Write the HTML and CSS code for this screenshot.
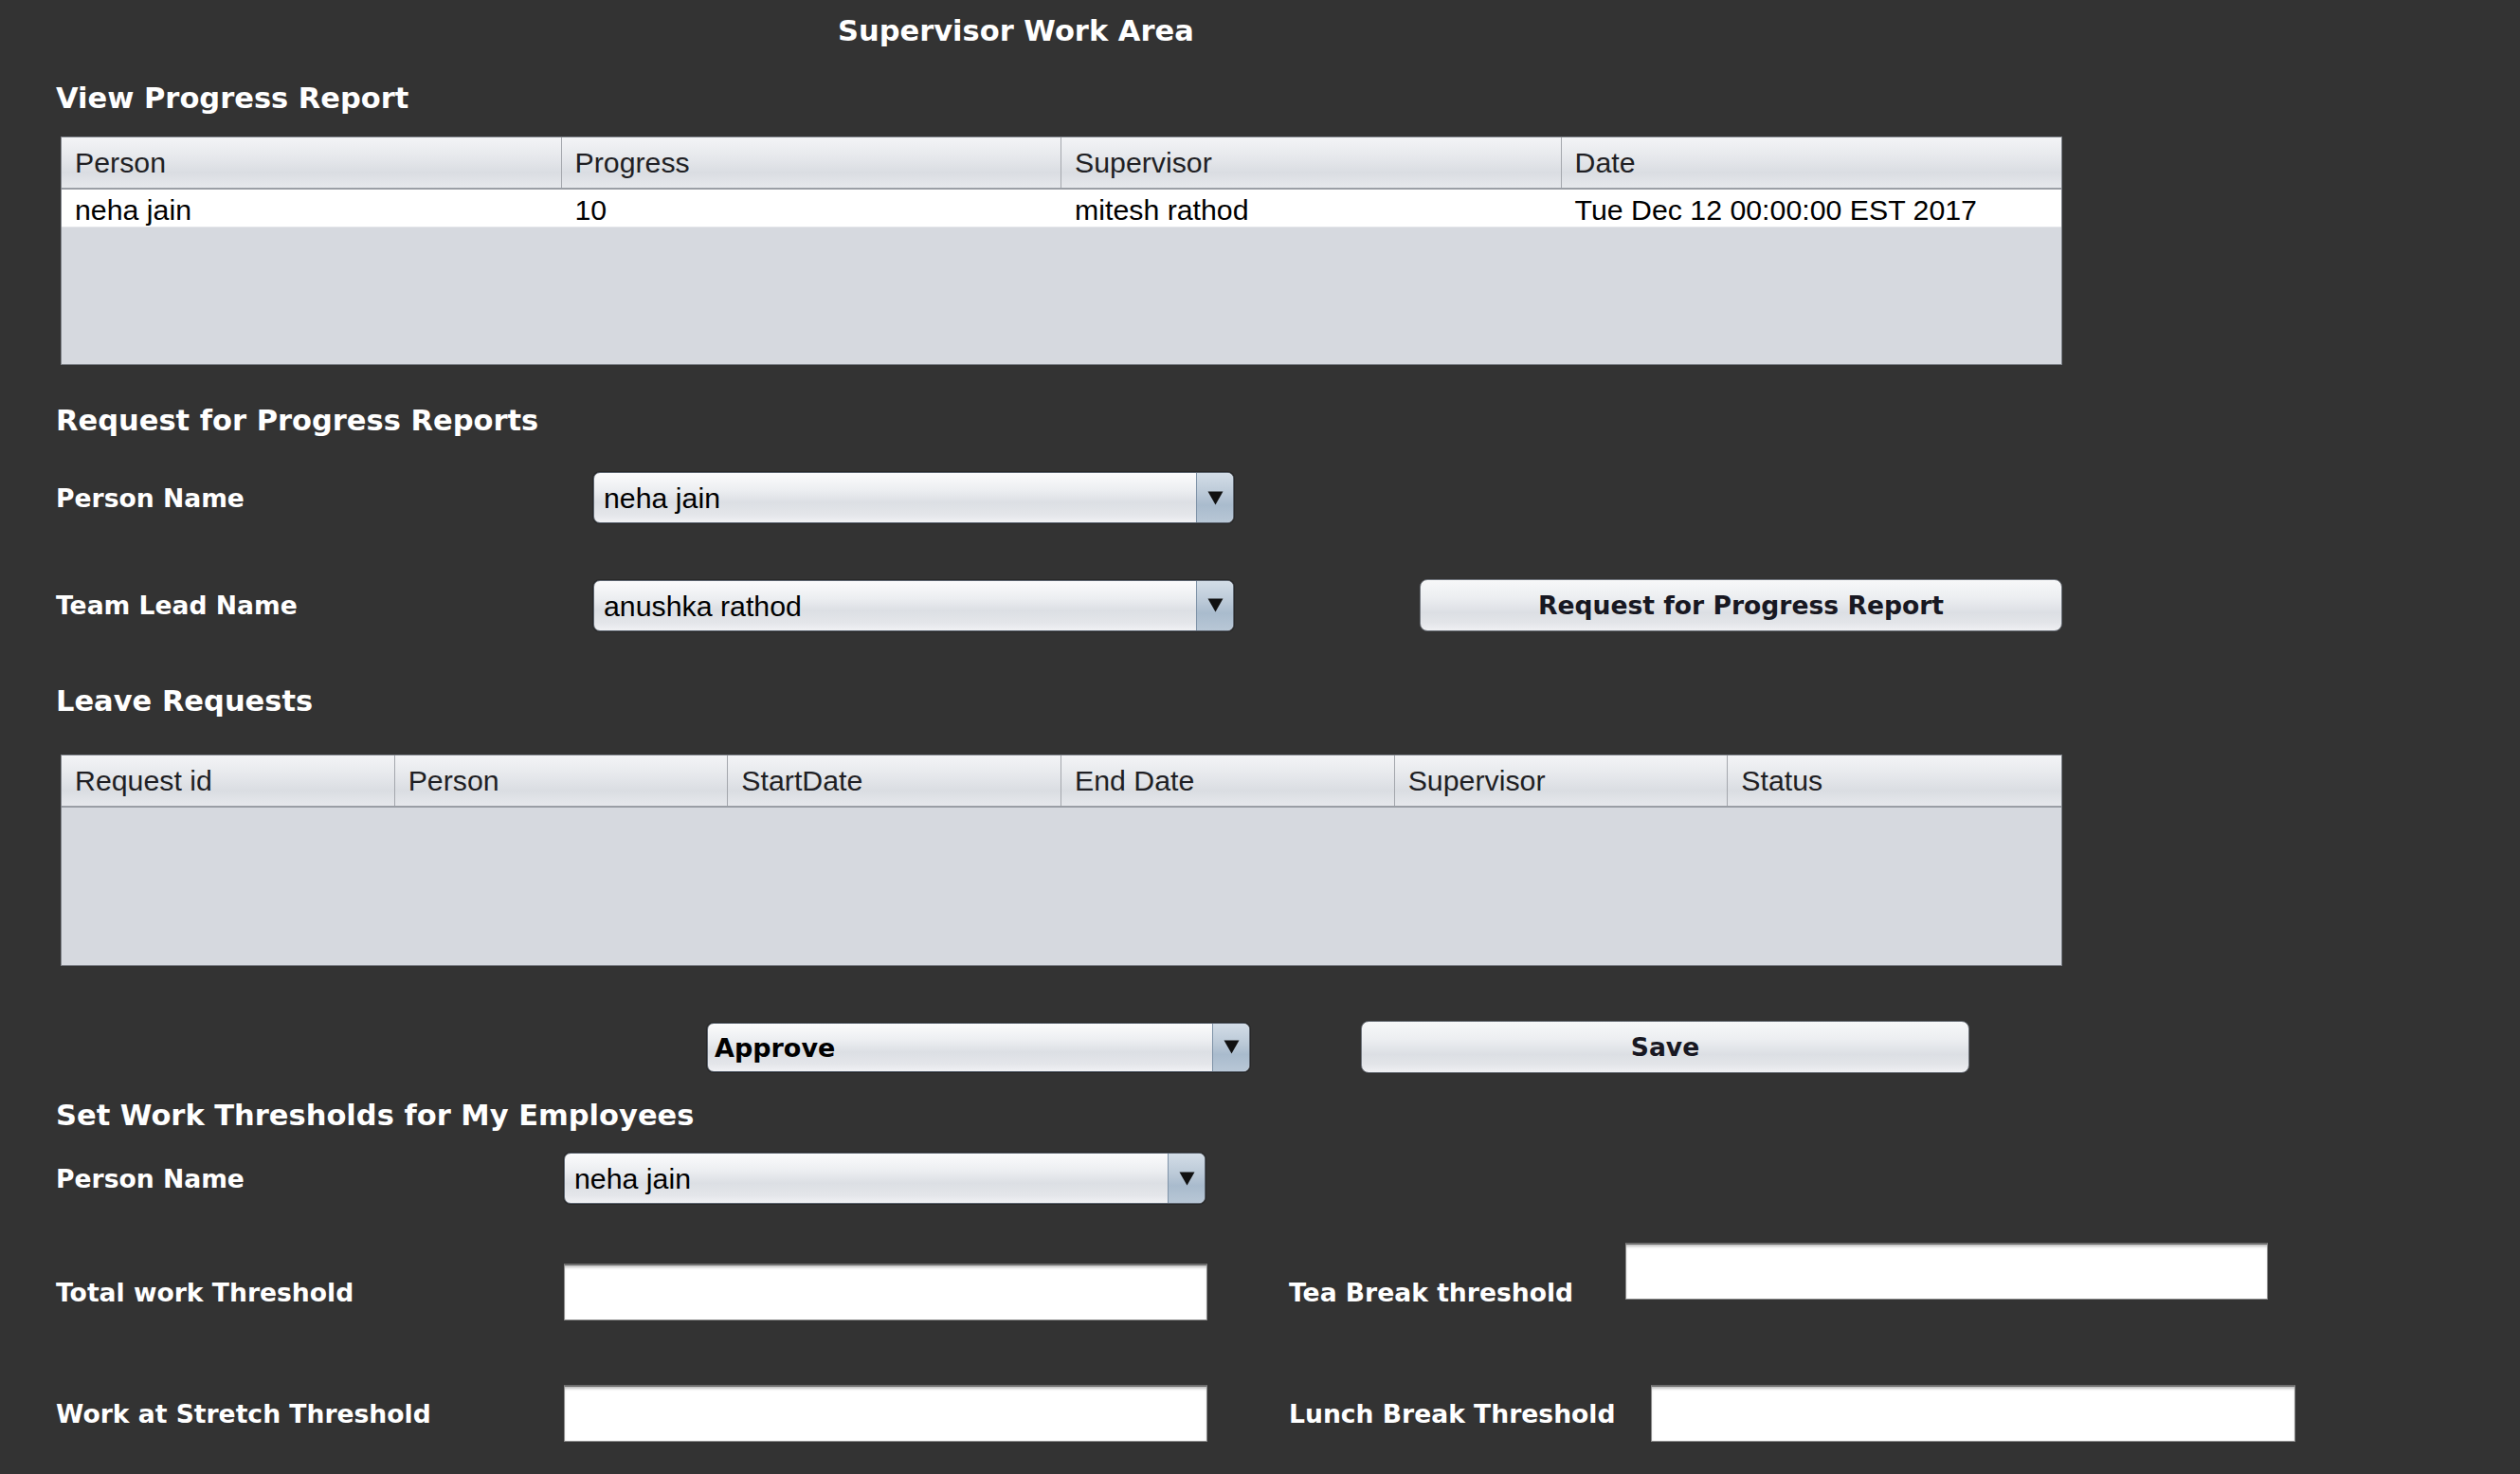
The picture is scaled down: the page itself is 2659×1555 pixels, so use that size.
FILE: index.html
```html
<!DOCTYPE html>
<html>
<head>
<meta charset="utf-8">
<title>Supervisor Work Area</title>
<link rel="stylesheet" href="styles.css">
</head>
<body>
<main class="page">
  <h1 class="title">Supervisor Work Area</h1>

  <h2 class="heading h-view">View Progress Report</h2>
  <div class="tbl tbl-progress">
    <div class="thead cols-4">
      <div class="th">Person</div>
      <div class="th">Progress</div>
      <div class="th">Supervisor</div>
      <div class="th">Date</div>
    </div>
    <div class="trow cols-4">
      <div class="td">neha jain</div>
      <div class="td">10</div>
      <div class="td">mitesh rathod</div>
      <div class="td">Tue Dec 12 00:00:00 EST 2017</div>
    </div>
  </div>

  <h2 class="heading h-req">Request for Progress Reports</h2>
  <div class="row row-req1">
    <div class="lbl lbl-req">Person Name</div>
    <div class="combo combo-req">
      <div class="combo-text">neha jain</div>
      <div class="combo-arrow"><svg width="17" height="15" viewBox="0 0 17 15"><path d="M0.5 0.5H16.5L8.5 14.5Z" fill="#111"/></svg></div>
    </div>
  </div>
  <div class="row row-req2">
    <div class="lbl lbl-req">Team Lead Name</div>
    <div class="combo combo-req">
      <div class="combo-text">anushka rathod</div>
      <div class="combo-arrow"><svg width="17" height="15" viewBox="0 0 17 15"><path d="M0.5 0.5H16.5L8.5 14.5Z" fill="#111"/></svg></div>
    </div>
    <div class="btn btn-request">Request for Progress Report</div>
  </div>

  <h2 class="heading h-leave">Leave Requests</h2>
  <div class="tbl tbl-leave">
    <div class="thead cols-6">
      <div class="th">Request id</div>
      <div class="th">Person</div>
      <div class="th">StartDate</div>
      <div class="th">End Date</div>
      <div class="th">Supervisor</div>
      <div class="th">Status</div>
    </div>
  </div>

  <div class="row row-approve">
    <div class="combo combo-approve">
      <div class="combo-text bold">Approve</div>
      <div class="combo-arrow"><svg width="17" height="15" viewBox="0 0 17 15"><path d="M0.5 0.5H16.5L8.5 14.5Z" fill="#111"/></svg></div>
    </div>
    <div class="btn btn-save">Save</div>
  </div>

  <h2 class="heading h-set">Set Work Thresholds for My Employees</h2>
  <div class="row row-set-person">
    <div class="lbl lbl-set">Person Name</div>
    <div class="combo combo-set">
      <div class="combo-text">neha jain</div>
      <div class="combo-arrow"><svg width="17" height="15" viewBox="0 0 17 15"><path d="M0.5 0.5H16.5L8.5 14.5Z" fill="#111"/></svg></div>
    </div>
  </div>

  <div class="row row-top row-total">
    <div class="lbl lbl-set lbl-low">Total work Threshold</div>
    <div class="field field-left field-low"></div>
    <div class="lbl lbl-tea lbl-low">Tea Break threshold</div>
    <div class="field field-tea"></div>
  </div>

  <div class="row row-top row-stretch">
    <div class="lbl lbl-set">Work at Stretch Threshold</div>
    <div class="field field-left"></div>
    <div class="lbl lbl-lunch">Lunch Break Threshold</div>
    <div class="field field-lunch"></div>
  </div>
</main>
</body>
</html>
```

FILE: styles.css
```css
html, body {
  margin: 0;
  padding: 0;
  background: #333333;
}

.page {
  padding: 0 0 0 59px;
  width: 2659px;
  height: 1555px;
  box-sizing: border-box;
  overflow: hidden;
  font-family: "DejaVu Sans", Verdana, sans-serif;
}

.title,
.heading {
  margin: 0;
  font-family: "DejaVu Sans", Verdana, sans-serif;
  font-weight: bold;
  font-size: 30.5px;
  line-height: 36px;
  color: #ffffff;
}

.title {
  margin: 15px 0 0 825px;
}

.h-view { margin-top: 35px; }
.h-req { margin-top: 41px; }
.h-leave { margin-top: 56px; }
.h-set { margin-top: 27px; }

/* tables */
.tbl {
  margin-left: 5px;
  width: 2112px;
  box-sizing: border-box;
  border: 1px solid #7f838a;
  background: #d6d9df;
}
.tbl-progress { margin-top: 22px; height: 241px; }
.tbl-leave { margin-top: 38px; height: 223px; }

.cols-4 { display: grid; grid-template-columns: repeat(4, 1fr); }
.cols-6 { display: grid; grid-template-columns: repeat(6, 1fr); }

.thead {
  height: 55px;
  box-sizing: border-box;
  border-bottom: 2px solid #9a9ea5;
  background: linear-gradient(#f3f4f6 0%, #e6e8ec 40%, #dadde2 70%, #e6e8ec 100%);
}

.th, .td {
  display: flex;
  align-items: center;
  padding-left: 14px;
  font-family: "Liberation Sans", Arial, sans-serif;
  font-size: 30.3px;
  white-space: nowrap;
  overflow: hidden;
}

.th {
  color: #1f1f24;
  border-right: 1px solid #a4a7ad;
}
.th:last-child { border-right: none; }

.trow {
  height: 40px;
  background: #ffffff;
  border-bottom: 1px solid #e4e6ea;
  box-sizing: border-box;
}
.td {
  color: #000000;
  padding-top: 4px;
}

/* form rows */
.row {
  display: flex;
  align-items: center;
}
.row-top { align-items: flex-start; }

.row-req1 { margin-top: 36px; height: 54px; }
.row-req2 { margin-top: 59px; height: 55px; }
.row-approve { margin-top: 58px; height: 55px; padding-left: 687px; }
.row-set-person { margin-top: 21px; height: 54px; }
.row-total { margin-top: 41px; }
.row-stretch { margin-top: 68px; }

.lbl {
  display: flex;
  align-items: center;
  height: 60px;
  font-family: "DejaVu Sans", Verdana, sans-serif;
  font-weight: bold;
  font-size: 26.6px;
  color: #ffffff;
  white-space: nowrap;
}
.lbl-req { width: 567px; }
.lbl-set { width: 536px; }
.lbl-tea { width: 355px; margin-left: 86px; }
.lbl-lunch { width: 382px; margin-left: 86px; }
.lbl-low { margin-top: 22px; }

/* combo boxes */
.combo {
  display: flex;
  box-sizing: border-box;
  height: 54px;
  border: 1px solid #5d6570;
  border-radius: 7px;
  overflow: hidden;
  background: linear-gradient(#fbfbfc 0%, #eceef1 35%, #dcdfe4 60%, #e4e6ea 85%, #f0f1f4 100%);
  box-shadow: 0 0 0 1px rgba(20, 20, 20, 0.35);
}
.combo-req { width: 676px; }
.combo-set { width: 677px; }
.combo-approve { width: 573px; height: 52px; }

.combo-text {
  flex: 1;
  display: flex;
  align-items: center;
  padding: 2px 0 0 10px;
  font-family: "Liberation Sans", Arial, sans-serif;
  font-size: 30.3px;
  color: #000000;
  white-space: nowrap;
}
.combo-text.bold {
  font-family: "DejaVu Sans", Verdana, sans-serif;
  font-weight: bold;
  font-size: 27px;
  padding-left: 7px;
}

.combo-arrow {
  width: 38px;
  display: flex;
  align-items: center;
  justify-content: center;
  border-left: 1px solid #7f93a8;
  background: linear-gradient(#d3dde7 0%, #bccad8 40%, #a9bbcd 65%, #b8c7d6 100%);
}

/* buttons */
.btn {
  display: flex;
  align-items: center;
  justify-content: center;
  box-sizing: border-box;
  height: 55px;
  border: 1px solid #70757d;
  border-radius: 8px;
  background: linear-gradient(#f7f8f9 0%, #eceef1 35%, #dcdfe4 65%, #e3e5e9 85%, #eff0f3 100%);
  font-family: "DejaVu Sans", Verdana, sans-serif;
  font-weight: bold;
  font-size: 26.6px;
  color: #181822;
  white-space: nowrap;
}
.btn-request { width: 678px; margin-left: 196px; }
.btn-save { width: 642px; margin-left: 117px; }

/* text fields */
.field {
  box-sizing: border-box;
  height: 60px;
  background: #ffffff;
  border: 1px solid #8c8c8c;
  border-top: 2px solid #6e6e6e;
  box-shadow: inset 0 3px 3px -1px rgba(0, 0, 0, 0.25);
}
.field-left { width: 679px; }
.field-low { margin-top: 22px; }
.field-tea { width: 678px; }
.field-lunch { width: 680px; }
```
